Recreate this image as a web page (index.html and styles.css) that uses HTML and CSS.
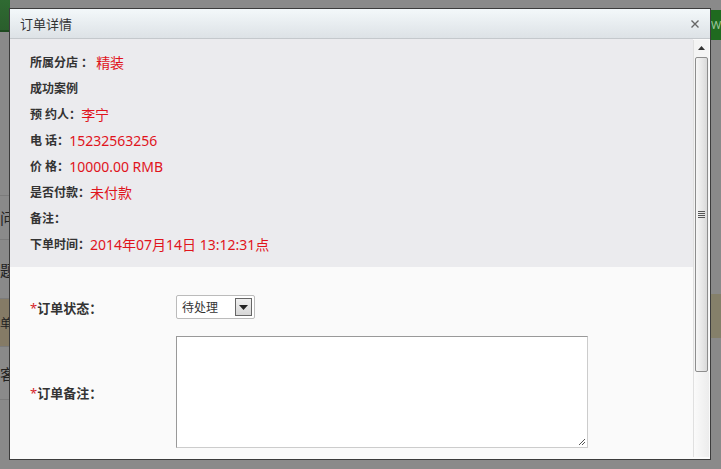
FILE: index.html
```html
<!DOCTYPE html>
<html lang="zh">
<head>
<meta charset="utf-8">
<link rel="stylesheet" href="styles.css">
</head>
<body>
<div class="page">
  <div class="left-strip">
    <div class="ls-green"></div>
    <div class="ls-row ls-r1"></div>
    <div class="ls-row ls-r2"><span>问题</span></div>
    <div class="ls-row ls-r3"><span>题目</span></div>
    <div class="ls-row ls-r4"><span>单总</span></div>
    <div class="ls-row ls-r5"><span>客户</span></div>
  </div>
  <div class="right-strip">
    <div class="rs-green">W</div>
    <div class="rs-yellow"></div>
  </div>
</div>

<div class="modal">
  <div class="modal-head">
    <span class="modal-title">订单详情</span>
    <svg class="modal-close" width="8" height="8" viewBox="0 0 8 8"><path d="M0.5 0.5L7.5 7.5M7.5 0.5L0.5 7.5" stroke="#666" stroke-width="1.4"/></svg>
  </div>
  <div class="modal-body">
    <div class="scroll-area">
      <div class="info">
        <div class="row"><b>所属分店 ：</b><span class="val big">精装</span></div>
        <div class="row"><b>成功案例</b></div>
        <div class="row"><b>预 约人：</b><span class="val">李宁</span></div>
        <div class="row"><b>电 话：</b><span class="val">15232563256</span></div>
        <div class="row"><b>价 格：</b><span class="val">10000.00 RMB</span></div>
        <div class="row"><b>是否付款：</b><span class="val">未付款</span></div>
        <div class="row"><b>备注：</b></div>
        <div class="row"><b>下单时间：</b><span class="val">2014年07月14日 13:12:31点</span></div>
      </div>
      <div class="form">
        <div class="frow">
          <label class="flabel"><i>*</i>订单状态：</label>
          <div class="select"><span>待处理</span><span class="sel-btn"><svg width="9" height="5" viewBox="0 0 9 5"><path d="M0 0h9L4.5 5z" fill="#222"/></svg></span></div>
        </div>
        <div class="frow frow-ta">
          <label class="flabel"><i>*</i>订单备注：</label>
          <div class="textarea"><svg class="grip" width="9" height="9" viewBox="0 0 9 9"><path d="M8 2L2 8M8 5L5 8" stroke="#555" stroke-width="1"/></svg></div>
        </div>
      </div>
    </div>
    <div class="scrollbar">
      <div class="sb-up"><svg width="7" height="4" viewBox="0 0 7 4"><path d="M0 4h7L3.5 0z" fill="#333"/></svg></div>
      <div class="sb-thumb"><div class="sb-grip"></div></div>
      <div class="sb-track"></div>
    </div>
  </div>
</div>
</body>
</html>
```
FILE: styles.css
```css
html, body {
  margin: 0;
  padding: 0;
}
body {
  width: 721px;
  height: 469px;
  overflow: hidden;
  background: #8a8a8a;
  font-family: "Noto Sans", "Noto Sans CJK SC", sans-serif;
  position: relative;
}
.page {
  display: flex;
  justify-content: space-between;
  height: 469px;
}
.left-strip {
  width: 60px;
  display: flex;
  flex-direction: column;
}
.ls-green {
  height: 30px;
  width: 10px;
  background: linear-gradient(#2f6a32, #2a5e2c);
  border-bottom: 2px solid #1d4a1f;
}
.ls-row {
  border-bottom: 1px solid #7b7b7b;
  font-size: 15px;
  color: #222;
  white-space: nowrap;
  display: flex;
  align-items: center;
}
.ls-r1 { height: 163px; }
.ls-r2 { height: 43px; }
.ls-r3 { height: 58px; }
.ls-r4 { height: 47px; background: #857b66; font-size: 12px; }
.ls-r5 { height: 52px; }
.right-strip {
  width: 10px;
  display: flex;
  flex-direction: column;
  padding-top: 10px;
}
.rs-green {
  height: 30px;
  background: #1f6a1f;
  color: #9bc59b;
  font-size: 11px;
  line-height: 30px;
  overflow: hidden;
}
.rs-yellow {
  margin-top: 254px;
  height: 44px;
  background: #85806a;
}

.modal {
  position: absolute;
  left: 9px;
  top: 8px;
  width: 700px;
  height: 450px;
  border: 1px solid #3c3c3c;
  background: #fafafa;
  display: flex;
  flex-direction: column;
}
.modal-head {
  height: 29px;
  flex: none;
  background: linear-gradient(#f3f8fa, #dde2e6);
  border-bottom: 1px solid #c4c8cc;
  display: flex;
  align-items: center;
  justify-content: space-between;
  padding: 0 11px 0 10px;
}
.modal-title {
  font-size: 13px;
  color: #333;
}
.modal-close {
  display: block;
}
.modal-body {
  flex: 1;
  display: flex;
  min-height: 0;
}
.scroll-area {
  flex: 1;
  display: flex;
  flex-direction: column;
}
.info {
  background: #ebebee;
  padding: 10px 0 10px 20px;
}
.row {
  height: 26px;
  display: flex;
  align-items: center;
  font-size: 12px;
  color: #333;
}
.row b { font-weight: bold; }
.val {
  color: #e0141c;
  font-size: 14px;
}
.val.big { margin-left: 3px; }
.form {
  padding: 28px 0 0 20px;
}
.frow {
  display: flex;
  align-items: center;
}
.frow-ta { margin-top: 17px; }
.flabel {
  width: 146px;
  font-size: 13px;
  font-weight: bold;
  color: #333;
}
.flabel i {
  font-style: normal;
  color: #d6252b;
  font-weight: normal;
}
.select {
  border: 1px solid #bbb;
  border-radius: 2px;
  background: #fff;
  display: flex;
  align-items: center;
  justify-content: space-between;
  padding: 0 2px 0 5px;
  box-sizing: border-box;
  width: 79px;
  height: 24px;
  font-size: 12px;
  color: #333;
}
.sel-btn {
  width: 15px;
  height: 16px;
  border: 1px solid #666;
  background: linear-gradient(#f0f0f0, #d6d6d6);
  display: flex;
  align-items: center;
  justify-content: center;
}
.textarea {
  width: 410px;
  height: 110px;
  border: 1px solid #999;
  border-right-color: #ccc;
  border-bottom-color: #ccc;
  background: #fff;
  position: relative;
}
.grip {
  position: absolute;
  right: 1px;
  bottom: 1px;
}
.scrollbar {
  width: 15px;
  flex: none;
  margin: 1px 1px 2px 0;
  display: flex;
  flex-direction: column;
  border-left: 1px solid #e0e0e0;
  background: #f4f4f4;
}
.sb-up {
  height: 16px;
  display: flex;
  align-items: center;
  justify-content: center;
}
.sb-thumb {
  height: 313px;
  margin: 1px 1px 0 1px;
  border: 1px solid #8d8d8d;
  border-radius: 2px;
  background: linear-gradient(90deg, #f6f6f6, #e6e6e6 60%, #d9d9d9);
  display: flex;
  align-items: center;
  justify-content: center;
}
.sb-grip {
  width: 7px;
  height: 7px;
  background: repeating-linear-gradient(#555 0 1px, transparent 1px 2px);
}
.sb-track {
  flex: 1;
  background: linear-gradient(90deg, #fafafa, #ececec);
}
```
